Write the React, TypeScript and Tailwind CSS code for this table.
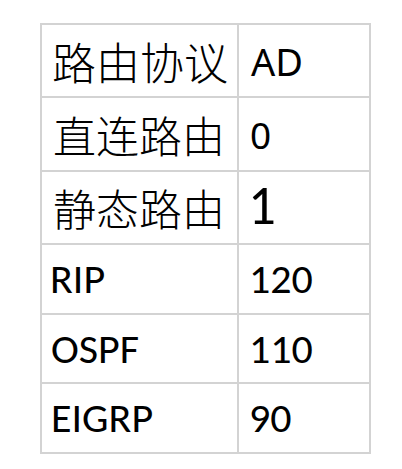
import React from "react";

const cjk = { fontFamily: '"Noto Sans CJK SC", sans-serif' };

type Row = {
  k: string;
  v: string;
  h: string;
  kCls: string;
  vCls: string;
};

const rows: Row[] = [
  { k: "路由协议", v: "AD", h: "h-[73px]", kCls: "font-['Noto_Sans_CJK_SC',sans-serif] font-light text-[44px] pl-[10px]", vCls: "font-['Noto_Sans',sans-serif] text-[38px] pl-[12px]" },
  { k: "直连路由", v: "0", h: "h-[74px]", kCls: "font-['Noto_Sans_CJK_SC',sans-serif] font-light text-[43px] pl-[11px]", vCls: "font-['Noto_Sans',sans-serif] text-[37px] pl-[11px]" },
  { k: "静态路由", v: "1", h: "h-[73px]", kCls: "font-['Noto_Sans_CJK_SC',sans-serif] font-light text-[43px] pl-[11px]", vCls: "font-['Carlito','Lato',sans-serif] text-[55px] pl-[9px] pb-[5px]" },
  { k: "RIP", v: "120", h: "h-[70px]", kCls: "font-['Carlito','Lato',sans-serif] text-[42px] pl-[8px]", vCls: "font-['Carlito','Lato',sans-serif] text-[42px] pl-[10px]" },
  { k: "OSPF", v: "110", h: "h-[69px]", kCls: "font-['Carlito','Lato',sans-serif] text-[42px] pl-[9px]", vCls: "font-['Carlito','Lato',sans-serif] text-[42px] pl-[10px]" },
  { k: "EIGRP", v: "90", h: "h-[70px]", kCls: "font-['Carlito','Lato',sans-serif] text-[42px] pl-[9px]", vCls: "font-['Carlito','Lato',sans-serif] text-[42px] pl-[10px]" },
];

export default function App() {
  return (
    <div className="w-[402px] h-[469px] bg-white pt-[23px] pl-[40px]" style={cjk}>
      <div className="grid grid-cols-[197px_132px] w-[331px] border-t-2 border-l-2 border-[#d3d3d3] text-black">
        {rows.map((r) => (
          <React.Fragment key={r.k}>
            <div className={`${r.h} flex items-center border-r-2 border-b-2 border-[#d3d3d3] leading-none ${r.kCls}`}>
              <span>{r.k}</span>
            </div>
            <div className={`${r.h} flex items-center border-r-2 border-b-2 border-[#d3d3d3] leading-none ${r.vCls}`}>
              <span>{r.v}</span>
            </div>
          </React.Fragment>
        ))}
      </div>
    </div>
  );
}
